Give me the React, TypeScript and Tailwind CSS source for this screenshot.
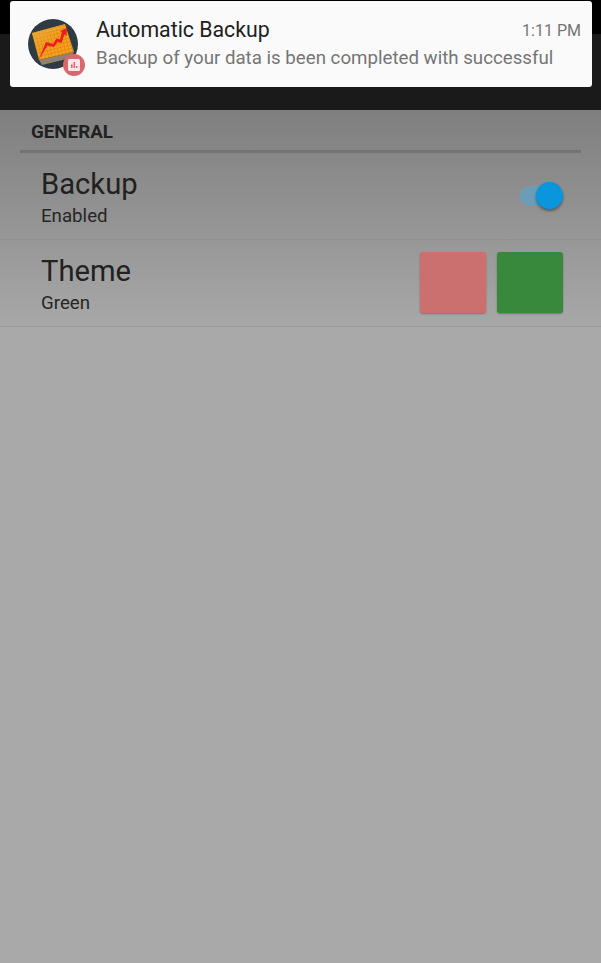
import React from 'react';

const AppIcon = () => (
  <svg width="58" height="58" viewBox="0 0 58 58" className="absolute left-[28px] top-[19px]">
    <defs>
      <pattern id="grid" width="3.5" height="3.5" patternUnits="userSpaceOnUse" patternTransform="rotate(-14)">
        <rect width="3.5" height="3.5" fill="#f8a020" />
        <path d="M0 0H3.5M0 0V3.5" stroke="#cf7408" strokeWidth="0.8" />
      </pattern>
      <linearGradient id="sheen" x1="0" y1="0" x2="1" y2="1">
        <stop offset="0" stopColor="#e4ab3a" stopOpacity="1" />
        <stop offset="0.5" stopColor="#e4ab3a" stopOpacity="0" />
      </linearGradient>
    </defs>
    <circle cx="25" cy="25" r="25" fill="#2f3b42" />
    <path d="M11 41 L46 33 L43 39 L14 46 Z" fill="#8f8273" />
    <path d="M4 14 L37 5 L46 33 L11 41 Z" fill="url(#grid)" />
    <path d="M4 14 L37 5 L46 33 L11 41 Z" fill="url(#sheen)" />
    <path d="M10.5 41 L18 23 L25 25 L28.5 19.5 L32 20.5 L34 13 L32 12 L39 9 L38.5 17 L36.5 15 L33.5 24 L29.5 23 L26 28 L19.5 26.5 Z" fill="#ee1c1c" />
    <circle cx="46" cy="46" r="11" fill="#d9686c" />
    <rect x="40" y="40" width="12" height="12" rx="1.5" fill="#fbe9e9" />
    <path d="M43 49V45.5H44.6V49ZM45.5 49V43H47V49ZM47.8 49V47H49.4V49Z" fill="#d9686c" />
  </svg>
);

const App: React.FC = () => {
  return (
    <div className="relative w-[601px] h-[963px] overflow-hidden bg-[#a9a9a9]" style={{ fontFamily: "Roboto, sans-serif" }}>
      {/* Status bar + toolbar, dimmed */}
      <div className="h-[34px] bg-black" />
      <div className="h-[76px] bg-[#1a1a1a] shadow-[0_2px_3px_rgba(0,0,0,0.3)]" />

      {/* Settings */}
      <div className="bg-gradient-to-b from-[#7f7f7f] to-[#a8a8a8] h-[217px]">
        <div className="mx-5 h-[43px] border-b-[3px] border-[#737373] pl-[11px] pt-[11px]">
          <p className="text-[18.8px] leading-[22px] font-bold text-[#212121]">GENERAL</p>
        </div>

        <div className="flex h-[87px] items-center justify-between border-b border-[#8f8f8f] pl-[41px] pr-[38px]">
          <div className="pt-[2px]">
            <p className="text-[29.2px] leading-[34px] text-[#212121]">Backup</p>
            <p className="text-[18.7px] leading-[22px] mt-[4px] text-[#262626]">Enabled</p>
          </div>
          <div className="relative h-5 w-[43px] rounded-full bg-[#6b9db8]">
            <div className="absolute right-0 -top-[4px] h-[27px] w-[27px] rounded-full bg-[#0a96dc] shadow-[0_2px_3px_rgba(0,0,0,0.4)]" />
          </div>
        </div>

        <div className="flex h-[87px] items-center justify-between border-b border-[#999999] pl-[41px] pr-[38px]">
          <div className="pt-[2px]">
            <p className="text-[29.2px] leading-[34px] text-[#212121]">Theme</p>
            <p className="text-[18.7px] leading-[22px] mt-[4px] text-[#262626]">Green</p>
          </div>
          <div className="flex gap-[11px] mb-px">
            <div className="h-[61px] w-[66px] rounded-[3px] bg-[#cb6f6f] shadow-[0_1px_2px_rgba(0,0,0,0.3)]" />
            <div className="h-[61px] w-[66px] rounded-[3px] bg-[#38893b] shadow-[0_1px_2px_rgba(0,0,0,0.3)]" />
          </div>
        </div>
      </div>

      {/* Notification */}
      <div className="absolute left-[10px] top-px h-[86px] w-[582px] rounded-[3px] bg-[#fafafa] pl-[86px] pr-[11px]">
        <div className="flex items-center justify-between pt-[13px]">
          <p className="text-[21.3px] leading-7 text-[#212121]">Automatic Backup</p>
          <p className="text-[16px] leading-7 pt-[3px] text-[#757575]">1:11 PM</p>
        </div>
        <p className="text-[18.7px] leading-6 mt-px text-[#757575]">Backup of your data is been completed with successful</p>
      </div>
      <AppIcon />
    </div>
  );
};

export default App;
